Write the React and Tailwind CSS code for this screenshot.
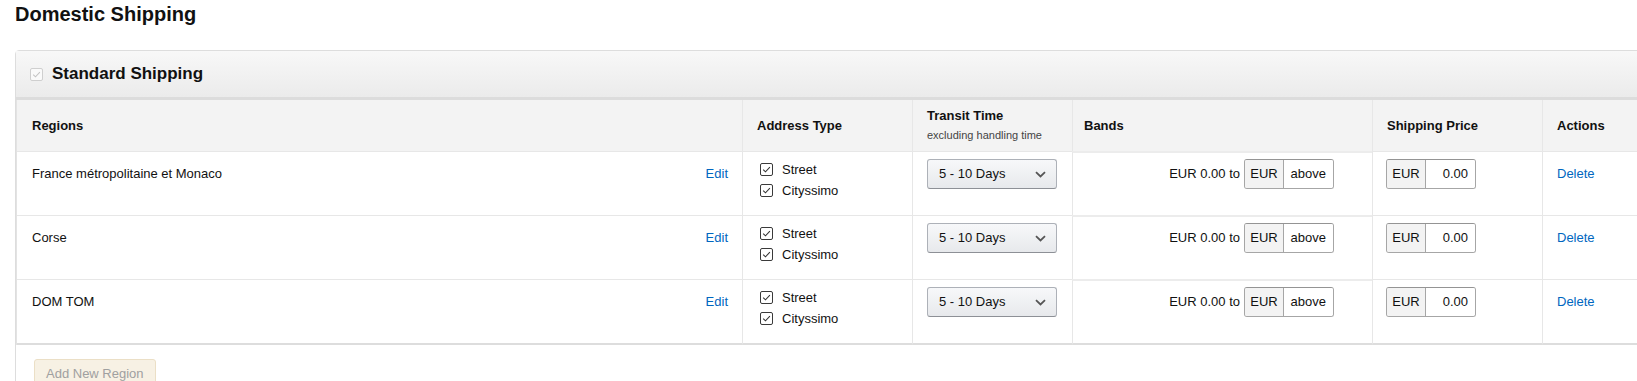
import React from 'react';

// ---------- small pieces ----------
const CheckBox = ({ muted = false }) => (
  <span
    className={`inline-flex h-[13px] w-[13px] shrink-0 items-center justify-center rounded-[2px] border ${
      muted ? 'border-[#cfcfcf] bg-[#fafafa]' : 'border-[#3a3a3a] bg-white'
    }`}
  >
    <svg viewBox="0 0 12 12" className="h-[11px] w-[11px]">
      <path d="M2.4 6.1 L4.9 8.5 L9.7 3.5" fill="none" stroke={muted ? '#c4c4c4' : '#333'} strokeWidth="1.15" />
    </svg>
  </span>
);

const DaysSelect = () => (
  <div className="flex h-[30px] w-[130px] items-center justify-between rounded-[3px] border border-[#adb1b8] border-b-[#8d9096] bg-linear-to-b from-[#f7f8fa] to-[#e7e9ec] pl-[11px] pr-[10px] text-[13px] text-[#111]">
    <span>5 - 10 Days</span>
    <svg viewBox="0 0 11 7" className="h-[7px] w-[11px]">
      <path d="M1 1.2 L5.5 5.4 L10 1.2" fill="none" stroke="#555" strokeWidth="1.8" />
    </svg>
  </div>
);

const CurrencyInput = ({ value }) => (
  <div className="flex h-[30px] w-[90px] overflow-hidden rounded-[3px] border border-[#a6a6a6] border-t-[#949494] text-[13px] text-[#111]">
    <span className="flex w-[39px] items-center justify-center border-r border-[#a6a6a6] bg-[#f3f3f3]">EUR</span>
    <span className="flex flex-1 items-center justify-end bg-white pr-[7px]">{value}</span>
  </div>
);

const regions = ['France métropolitaine et Monaco', 'Corse', 'DOM TOM'];

// ---------- page ----------
export default function App() {
  return (
    <div className="h-[381px] w-full overflow-hidden bg-white px-[15px] font-['Liberation_Sans',Arial,sans-serif] text-[#111]">
      <h1 className="pt-[2px] text-[20px] font-bold leading-6">Domestic Shipping</h1>

      <div className="mt-[24px] w-[1680px] rounded-t-[4px] border border-[#dddddd] pb-6">
        {/* group header */}
        <div className="flex h-[49px] items-center gap-[9px] border-b-[3px] border-[#dcdcdc] bg-linear-to-b from-[#f8f8f8] to-[#ebebeb] pl-[14px]">
          <CheckBox muted />
          <span className="text-[17px] font-bold leading-6">Standard Shipping</span>
        </div>

        <table className="w-[1678px] table-fixed border-separate border-spacing-0 border-l border-[#e3e3e3] text-[13px]">
          <colgroup>
            <col className="w-[725px]" />
            <col className="w-[170px]" />
            <col className="w-[160px]" />
            <col className="w-[300px]" />
            <col className="w-[170px]" />
            <col className="w-[153px]" />
          </colgroup>
          <thead>
            <tr className="bg-[#f3f3f3] text-left align-middle">
              <th className="h-[51px] pl-[15px] font-bold">Regions</th>
              <th className="border-l border-[#e7e7e7] pl-[14px] font-bold">Address Type</th>
              <th className="border-l border-[#e7e7e7] pl-[14px] font-bold leading-[17px]">
                <div>Transit Time</div>
                <div className="mt-[3px] text-[11px] font-normal text-[#444]">excluding handling time</div>
              </th>
              <th className="border-l border-[#e7e7e7] pl-[11px] font-bold">Bands</th>
              <th className="border-l border-[#e7e7e7] pl-[14px] font-bold">Shipping Price</th>
              <th className="border-l border-[#e7e7e7] pl-[14px] font-bold">Actions</th>
            </tr>
          </thead>
          <tbody>
            {regions.map((name, i) => {
              const last = i === regions.length - 1;
              const rowB = last ? 'border-b-2 border-b-[#dddddd]' : '';
              return (
                <tr key={name} className="align-top">
                  <td className={`${last ? 'h-[66px]' : 'h-[64px]'} border-t border-[#e7e7e7] pl-[15px] pr-[14px] pt-[12px] leading-[19px] ${rowB}`}>
                    <div className="flex justify-between">
                      <span>{name}</span>
                      <a className="text-[#0066c0]">Edit</a>
                    </div>
                  </td>
                  <td className={`border-l border-t border-[#e7e7e7] pl-[17px] pt-[7px] ${rowB}`}>
                    <div className="flex h-[21px] items-center gap-[9px]">
                      <CheckBox />
                      <span>Street</span>
                    </div>
                    <div className="flex h-[21px] items-center gap-[9px]">
                      <CheckBox />
                      <span>Cityssimo</span>
                    </div>
                  </td>
                  <td className={`border-l border-t border-[#e7e7e7] pl-[14px] pt-[7px] ${rowB}`}>
                    <DaysSelect />
                  </td>
                  <td className={`border-l border-t-2 border-[#e7e7e7] border-t-[#ececec] pr-[38px] pt-[6px] ${rowB}`}>
                    <div className="flex items-center justify-end gap-[4px]">
                      <span>EUR 0.00 to</span>
                      <CurrencyInput value="above" />
                    </div>
                  </td>
                  <td className={`border-l border-t border-[#e7e7e7] pl-[13px] pt-[7px] ${rowB}`}>
                    <CurrencyInput value="0.00" />
                  </td>
                  <td className={`border-l border-t border-[#e7e7e7] pl-[14px] pt-[12px] leading-[19px] ${rowB}`}>
                    <a className="text-[#0066c0]">Delete</a>
                  </td>
                </tr>
              );
            })}
          </tbody>
        </table>

        <div className="pl-[18px] pt-[14px]">
          <button
            type="button"
            disabled
            className="h-[29px] rounded-[3px] border border-[#ebdfc6] bg-[#f7f1e4] px-[11px] text-[13px] text-[#a0a0a0]"
          >
            Add New Region
          </button>
        </div>
      </div>
    </div>
  );
}
